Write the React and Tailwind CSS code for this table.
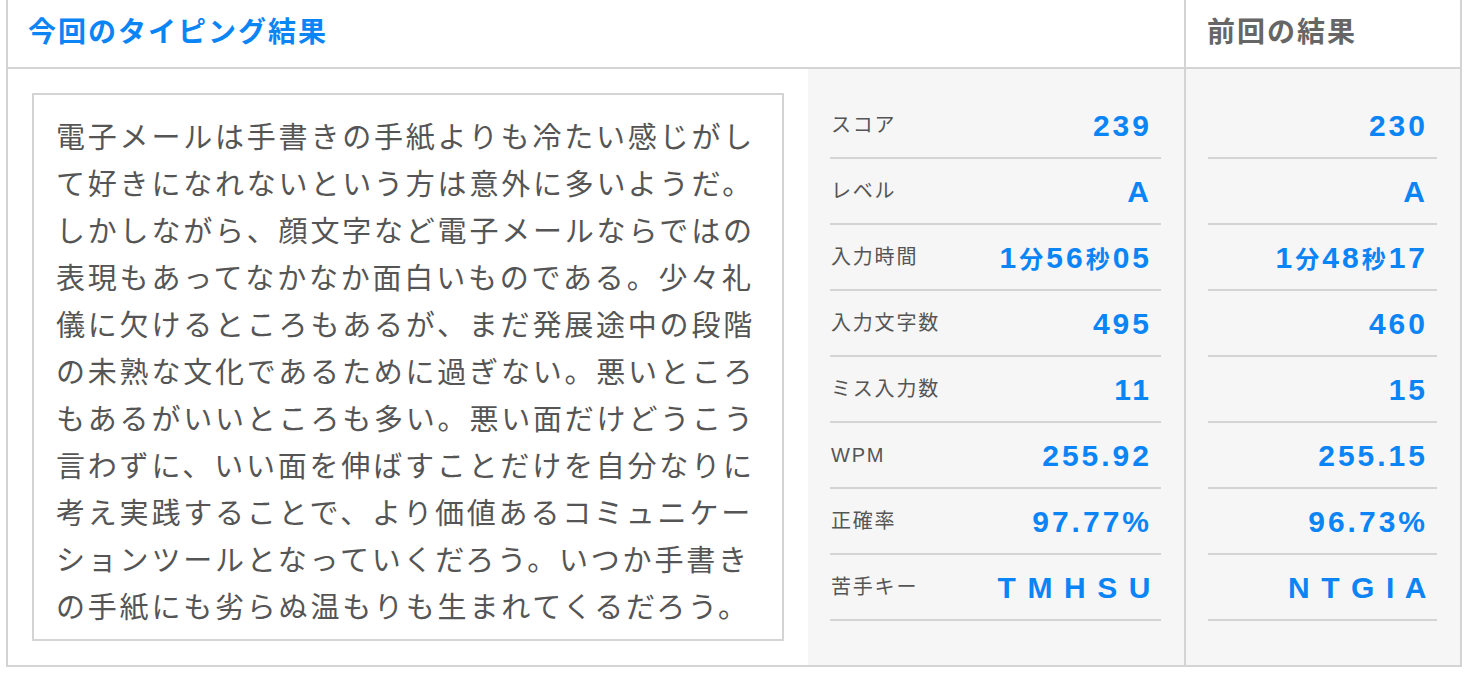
import React from "react";

const BODY =
  "電子メールは手書きの手紙よりも冷たい感じがして好きになれないという方は意外に多いようだ。しかしながら、顔文字など電子メールならではの表現もあってなかなか面白いものである。少々礼儀に欠けるところもあるが、まだ発展途中の段階の未熟な文化であるために過ぎない。悪いところもあるがいいところも多い。悪い面だけどうこう言わずに、いい面を伸ばすことだけを自分なりに考え実践することで、より価値あるコミュニケーションツールとなっていくだろう。いつか手書きの手紙にも劣らぬ温もりも生まれてくるだろう。";

const LABELS = ["スコア", "レベル", "入力時間", "入力文字数", "ミス入力数", "WPM", "正確率", "苦手キー"];
const CURRENT = ["239", "A", "1分56秒05", "495", "11", "255.92", "97.77%", "T M H S U"];
const PREV = ["230", "A", "1分48秒17", "460", "15", "255.15", "96.73%", "N T G I A"];

function Value({ v }) {
  const parts = v.split(/(分|秒)/);
  const isKeys = v.includes(" ");
  return (
    <span
      className={
        isKeys
          ? "font-['Liberation_Sans','Noto_Sans_CJK_JP',sans-serif] text-[30px] font-bold tracking-[1.6px] text-[#0b84f5] whitespace-pre"
          : "font-['Liberation_Sans','Noto_Sans_CJK_JP',sans-serif] text-[30px] font-bold tracking-[3px] text-[#0b84f5] whitespace-pre"
      }
    >
      {parts.map((p, i) =>
        p === "分" || p === "秒" ? (
          <span key={i} className="text-[24px]">
            {p}
          </span>
        ) : (
          <span key={i}>{p}</span>
        )
      )}
    </span>
  );
}

function Row({ label, value }) {
  return (
    <div className="flex h-[66px] items-center justify-between border-b-2 border-[#d4d4d4] pl-[1px] pr-[9px]">
      <span className="font-['Liberation_Sans','Noto_Sans_CJK_JP',sans-serif] text-[20px] tracking-[1.8px] text-[#555]">
        {label}
      </span>
      <Value v={value} />
    </div>
  );
}

export default function App() {
  return (
    <div className="min-h-[680px] bg-white font-['Noto_Sans_CJK_JP',sans-serif]">
      <div className="ml-[6px] w-[1456px] border-x-2 border-b-2 border-[#d4d4d4]">
        {/* header */}
        <div className="flex h-[69px] border-b-2 border-[#d4d4d4]">
          <div className="flex w-[1178px] items-center border-r-2 border-[#d4d4d4] pb-[7px] pl-[20px]">
            <h2 className="text-[28px] font-bold tracking-[2px] text-[#0b84f5]">今回のタイピング結果</h2>
          </div>
          <div className="flex flex-1 items-center pb-[7px] pl-[21px]">
            <h2 className="text-[28px] font-bold tracking-[2px] text-[#666]">前回の結果</h2>
          </div>
        </div>
        {/* body */}
        <div className="flex">
          <div className="w-[800px] p-[24px]">
            <div className="border-2 border-[#d4d4d4] px-[22px] pt-[17px] pb-[10px]">
              <p className="text-[29px] leading-[47px] tracking-[2.8px] text-[#555]">{BODY}</p>
            </div>
          </div>
          <div className="w-[378px] border-r-2 border-[#d4d4d4] bg-[#f6f6f6] pt-[24px] pl-[22px] pr-[23px]">
            {LABELS.map((l, i) => (
              <Row key={l} label={l} value={CURRENT[i]} />
            ))}
          </div>
          <div className="flex-1 bg-[#f6f6f6] pt-[24px] pl-[22px] pr-[23px]">
            {PREV.map((v, i) => (
              <div
                key={i}
                className="flex h-[66px] items-center justify-end border-b-2 border-[#d4d4d4] pr-[9px]"
              >
                <Value v={v} />
              </div>
            ))}
          </div>
        </div>
      </div>
    </div>
  );
}
